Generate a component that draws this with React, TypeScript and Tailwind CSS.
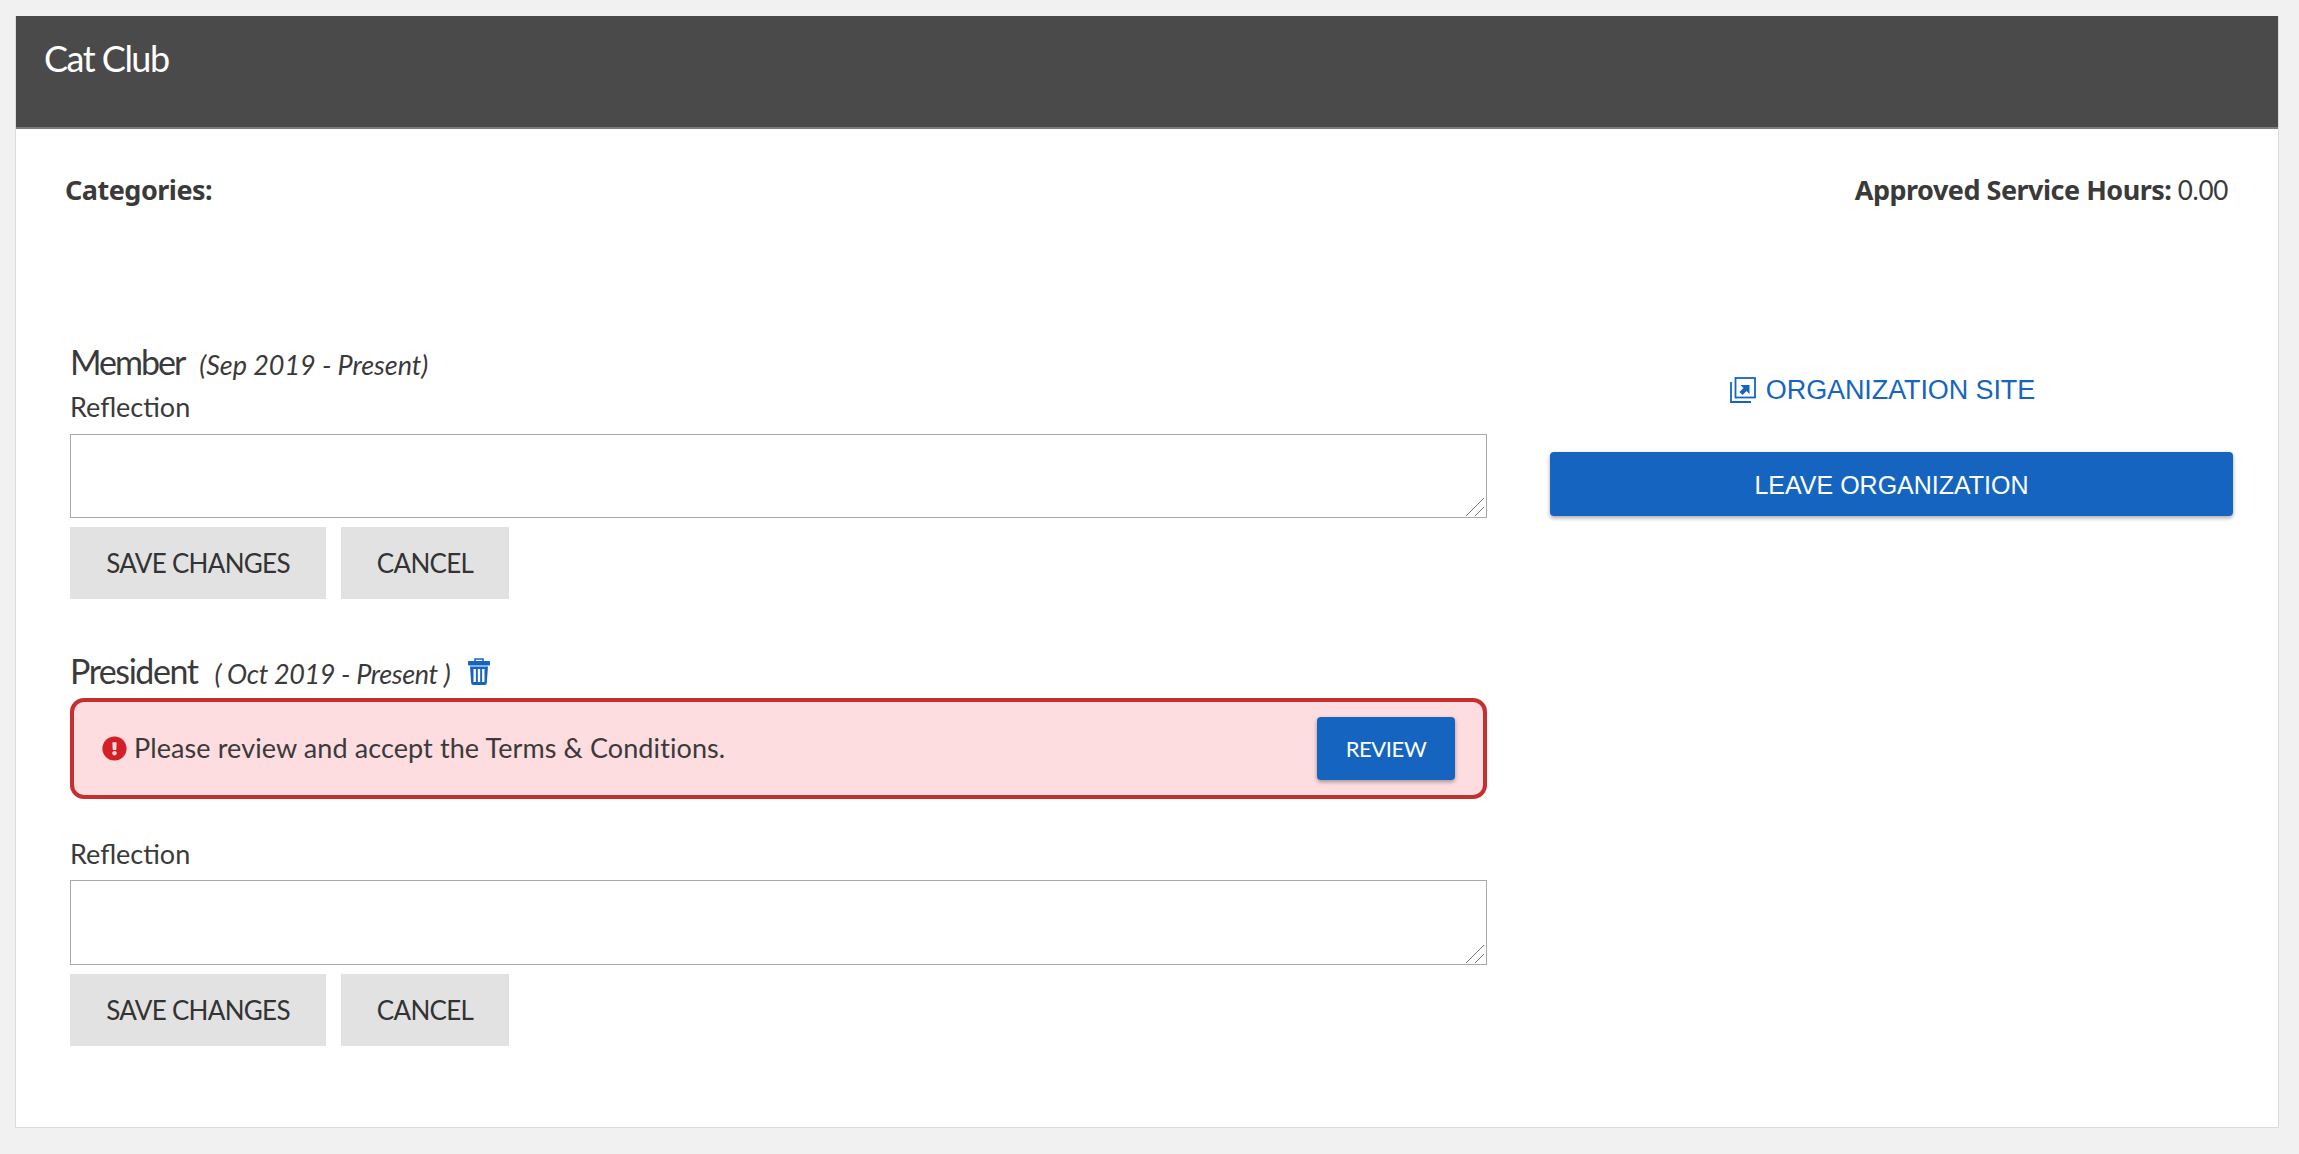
import React from 'react';
import { FaExclamationCircle } from 'react-icons/fa';

const SANS = "font-['Lato','Noto_Sans',sans-serif]";

const ExternalIcon = () => (
  <svg viewBox="0 0 26 26" className="w-[26px] h-[26px] text-[#1565c0]" fill="none" stroke="currentColor">
    <rect x="5.5" y="1" width="19.5" height="19.5" strokeWidth="1.8" />
    <path d="M1 5v20h20" strokeWidth="1.8" />
    <path d="M10.5 8h9v9l-3-3-4 4-3-3 4-4z" fill="currentColor" stroke="none" />
  </svg>
);

const TrashIcon = () => (
  <svg viewBox="0 0 22 27" className="ml-[18px] w-[22px] h-[27px] self-center text-[#1565c0]" fill="currentColor">
    <path d="M7 3V1h8v2" fill="none" stroke="currentColor" strokeWidth="1.5" />
    <rect x="0" y="3" width="22" height="4.5" rx="1" />
    <path d="M2 8.5h18l-1.2 16.5a2 2 0 0 1-2 2H5.2a2 2 0 0 1-2-2z" />
    <rect x="5.5" y="11" width="2.4" height="13" fill="#ffffff" />
    <rect x="9.8" y="11" width="2.4" height="13" fill="#ffffff" />
    <rect x="14.1" y="11" width="2.4" height="13" fill="#ffffff" />
  </svg>
);

const ReflectionForm = ({ areaHeight, labelClass }: { areaHeight: string; labelClass: string }) => (
  <div>
    <label className={`block h-9 leading-9 text-[27px] text-[#3a3a3a] ${labelClass}`}>Reflection</label>
    <div className="relative">
      <textarea className={`block w-full resize-none border border-[#aaaaaa] bg-white ${areaHeight}`} />
      {/* grip drawn larger than the browser's own */}
      <svg viewBox="0 0 20 18" className="absolute right-[2px] bottom-[2px] w-5 h-[18px] pointer-events-none" fill="none" stroke="#555555" strokeWidth="0.8">
        <path d="M1 18 19 0M10 18l9-9" />
      </svg>
    </div>
    <div className="flex gap-[15px] mt-[9px]">
      <button className="w-[256px] h-[72px] bg-[#e2e2e2] text-[26px] tracking-[-0.7px] text-[#333333]">SAVE CHANGES</button>
      <button className="w-[168px] h-[72px] bg-[#e2e2e2] text-[26px] tracking-[-0.7px] text-[#333333]">CANCEL</button>
    </div>
  </div>
);

const App: React.FC = () => {
  return (
    <div className={`min-h-screen bg-[#f1f1f1] pt-4 pl-[15px] pr-5 ${SANS}`}>
      <div className="bg-white border-x border-b border-[#dcdcdc] pb-[81px]">
        {/* Title bar */}
        <header className="h-[113px] bg-[#4a4a4a] border-b-2 border-[#7c7c7c] pl-[28px] pt-[20px]">
          <h1 className="text-[36px] leading-[44px] font-normal tracking-[-1.5px] text-white">Cat Club</h1>
        </header>

        {/* Summary */}
        <div className="flex justify-between pl-[49px] pr-[50px] pt-[43px] h-[79px] text-[26px] leading-9 text-[#3a3a3a]">
          <span className="font-['Noto_Sans',sans-serif] font-bold text-[27px] tracking-[-0.5px]">Categories:</span>
          <span className="tracking-[-0.3px]">
            <b className="font-['Noto_Sans',sans-serif] font-bold text-[27px] tracking-[-0.5px]">Approved Service Hours:</b> 0.00
          </span>
        </div>

        <div className="flex mt-[134px] pl-[54px]">
          {/* Positions */}
          <div className="w-[1417px]">
            <div className="flex items-baseline h-10 leading-10 text-[#3a3a3a]">
              <span className="text-[34px] tracking-[-2px]">Member</span>
              <span className="ml-[15px] text-[27px] italic tracking-[-0.05px]">(Sep 2019 - Present)</span>
            </div>
            <div className="mt-[7px]">
              <ReflectionForm areaHeight="h-[84px]" labelClass="mb-[9px]" />
            </div>

            <div className="flex items-baseline h-10 leading-10 mt-[52px] text-[#3a3a3a]">
              <span className="text-[34px] tracking-[-1.45px]">President</span>
              <span className="ml-[17px] text-[27px] italic tracking-[-0.35px]">( Oct 2019 - Present )</span>
              <TrashIcon />
            </div>

            <div className="mt-[7px] h-[101px] flex items-center justify-between bg-[#fddde0] border-4 border-[#c62f2f] rounded-[14px] pl-[28px] pr-[28px]">
              <div className="flex items-center gap-[7px]">
                <FaExclamationCircle className="w-[25px] h-[25px] text-[#d32026]" />
                <span className="text-[27px] tracking-[0.1px] text-[#3a3a3a]">Please review and accept the Terms &amp; Conditions.</span>
              </div>
              <button className="w-[138px] h-[63px] rounded bg-[#1565c0] text-white text-[22px] tracking-[-0.4px] shadow-[0_2px_4px_rgba(0,0,0,0.35)]">REVIEW</button>
            </div>

            <div className="mt-[37px]">
              <ReflectionForm areaHeight="h-[85px]" labelClass="mb-[8px]" />
            </div>
          </div>

          {/* Actions */}
          <div className="ml-[63px] w-[683px] font-['Liberation_Sans',Arial,sans-serif]">
            <a className="mt-[30px] h-9 pr-[18px] flex items-center justify-center gap-[10px] text-[27px] tracking-[-0.1px] text-[#1565c0]">
              <ExternalIcon />
              ORGANIZATION SITE
            </a>
            <button className="block mt-[44px] w-full h-[64px] pt-[3px] rounded bg-[#1565c0] text-white text-[25px] shadow-[0_2px_4px_rgba(0,0,0,0.35)]">LEAVE ORGANIZATION</button>
          </div>
        </div>
      </div>
    </div>
  );
};

export default App;
